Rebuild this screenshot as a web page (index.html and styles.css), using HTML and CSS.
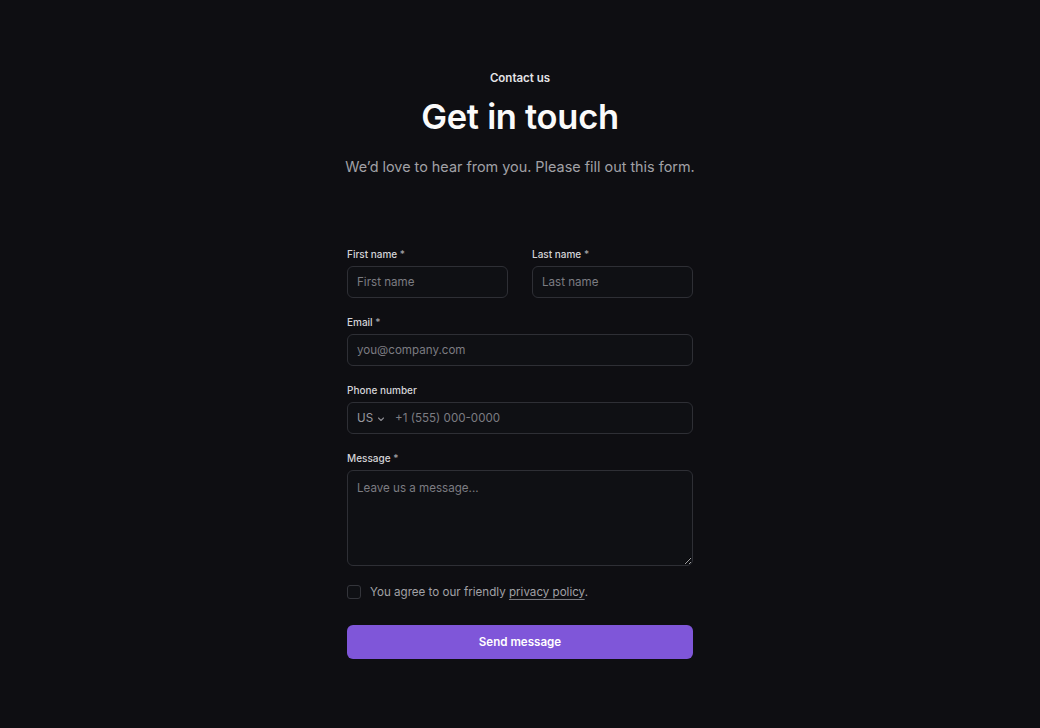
FILE: index.html
```html
<!DOCTYPE html>
<html lang="en">
<head>
<meta charset="utf-8">
<title>Contact us</title>
<link rel="stylesheet" href="styles.css">
</head>
<body>
<main class="page">
  <header class="intro">
    <p class="eyebrow">Contact us</p>
    <h1 class="title">Get in touch</h1>
    <p class="lead">We’d love to hear from you. Please fill out this form.</p>
  </header>
  <form class="form">
    <div class="row">
      <label class="field">
        <span class="label">First name <span class="req">*</span></span>
        <input class="input" type="text" placeholder="First name">
      </label>
      <label class="field">
        <span class="label">Last name <span class="req">*</span></span>
        <input class="input" type="text" placeholder="Last name">
      </label>
    </div>
    <label class="field">
      <span class="label">Email <span class="req">*</span></span>
      <input class="input" type="email" placeholder="you@company.com">
    </label>
    <div class="field">
      <span class="label">Phone number</span>
      <div class="phone">
        <span class="country">US
          <svg class="chev" width="8" height="8" viewBox="0 0 8 8" fill="none"><path d="M1.5 3 L4 5.5 L6.5 3" stroke="#8a8a90" stroke-width="1.1" stroke-linecap="round" stroke-linejoin="round"/></svg>
        </span>
        <input class="phone-input" type="tel" placeholder="+1 (555) 000-0000">
      </div>
    </div>
    <label class="field">
      <span class="label">Message <span class="req">*</span></span>
      <textarea class="textarea" placeholder="Leave us a message..."></textarea>
    </label>
    <label class="agree">
      <span class="box"></span>
      <span>You agree to our friendly <a class="link" href="#">privacy policy</a>.</span>
    </label>
    <button class="submit" type="button">Send message</button>
  </form>
</main>
</body>
</html>
```
FILE: styles.css
```css
* { box-sizing: border-box; }
html, body { margin: 0; padding: 0; }
body {
  background: #0e0e12;
  color: #f4f4f5;
  font-family: Inter, "Noto Sans", sans-serif;
  height: 728px;
}
.page {
  display: flex;
  flex-direction: column;
  align-items: center;
  padding-top: 69px;
}
.intro {
  display: flex;
  flex-direction: column;
  align-items: center;
  text-align: center;
}
.eyebrow {
  margin: 0;
  font-size: 11.5px;
  line-height: 18px;
  font-weight: 600;
  color: #e4e4e7;
}
.title {
  margin: 9px 0 0;
  font-size: 34.5px;
  line-height: 42px;
  font-weight: 600;
  letter-spacing: -0.3px;
  color: #fafafa;
}
.lead {
  margin: 18px 0 0;
  font-size: 14.4px;
  line-height: 22px;
  color: #a1a1a6;
}
.form {
  width: 346px;
  margin-top: 68px;
  display: flex;
  flex-direction: column;
  gap: 16px;
}
.row {
  display: grid;
  grid-template-columns: 1fr 1fr;
  gap: 24px;
}
.field {
  display: flex;
  flex-direction: column;
  gap: 4px;
}
.label {
  font-size: 10px;
  line-height: 16px;
  font-weight: 500;
  color: #d4d4d8;
}
.req { color: #a1a1a6; }
.input, .phone, .textarea {
  height: 32px;
  border: 1px solid #2e2f35;
  border-radius: 6px;
  background: #0f1014;
  font-family: inherit;
  font-size: 11.6px;
  color: #f4f4f5;
  outline: none;
}
.input { padding: 0 9px; width: 100%; }
::placeholder { color: #7c7c82; opacity: 1; }
.phone {
  display: flex;
  align-items: center;
  padding: 0 9px;
}
.country {
  display: flex;
  align-items: center;
  gap: 4px;
  color: #9a9aa0;
  margin-right: 10px;
}
.chev { margin-top: 1px; }
.phone-input {
  flex: 1;
  border: 0;
  background: transparent;
  font-family: inherit;
  font-size: 11.6px;
  color: #f4f4f5;
  outline: none;
  padding: 0;
}
.textarea {
  height: 96px;
  padding: 9px 9px;
  resize: vertical;
  line-height: 16px;
}
.agree {
  display: flex;
  align-items: center;
  gap: 9px;
  font-size: 11.6px;
  line-height: 20px;
  color: #a1a1a6;
}
.box {
  width: 14px;
  height: 14px;
  border: 1px solid #34353b;
  border-radius: 3px;
  background: #0f1014;
}
.link {
  color: #a1a1a6;
  text-decoration: underline;
  text-underline-offset: 3px;
  text-decoration-color: #7a7a80;
}
.submit {
  margin-top: 7px;
  height: 34px;
  border: 0;
  border-radius: 6px;
  background: #7f56d9;
  color: #ffffff;
  font-family: inherit;
  font-size: 11.6px;
  font-weight: 600;
}
```
